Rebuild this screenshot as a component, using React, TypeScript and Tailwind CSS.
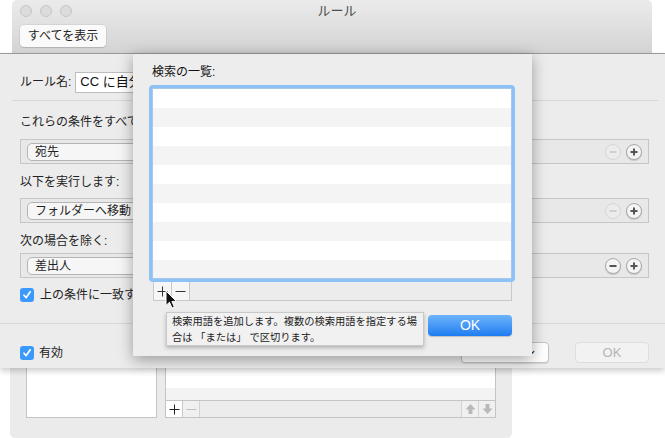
import React from "react";

const font = "font-['Liberation_Sans','Noto_Sans_CJK_JP',sans-serif]";

function CircleButton({ kind, dim }: { kind: "plus" | "minus"; dim?: boolean }) {
  return (
    <div
      className={`flex h-[16px] w-[16px] items-center justify-center rounded-full border ${
        dim ? "border-[#d6d6d6] bg-[#ececec]" : "border-[#a9a9a9] bg-[#f4f4f4] shadow-[0_1px_1px_rgba(0,0,0,0.15)]"
      }`}
    >
      <svg width="10" height="10" viewBox="0 0 10 10">
        <rect x="1.5" y="4" width="7" height="2" fill={dim ? "#d0d0d0" : "#555"} />
        {kind === "plus" ? <rect x="4" y="1.5" width="2" height="7" fill={dim ? "#d0d0d0" : "#555"} /> : null}
      </svg>
    </div>
  );
}

function Checkbox() {
  return (
    <div className="flex h-[14px] w-[14px] items-center justify-center rounded-[3px] bg-[#3b99fc]">
      <svg width="10" height="10" viewBox="0 0 10 10">
        <path d="M2 5.2 L4.2 7.6 L8.2 1.8" stroke="white" strokeWidth="1.7" fill="none" strokeLinecap="round" strokeLinejoin="round" />
      </svg>
    </div>
  );
}

function ConditionRow({ label, minusDim }: { label: string; minusDim: boolean }) {
  return (
    <div className="ml-5 mr-4 flex h-[25px] items-center border border-[#c6c6c6] bg-[#e8e8e8] pl-[6px] pr-[6px]">
      <div className="flex h-[18px] w-[170px] items-center rounded-l-[5px] border border-[#b4b4b4] bg-[#f6f6f6] pl-[7px] text-[12px] text-[#222]">
        {label}
      </div>
      <div className="flex-1" />
      <div className="flex items-center gap-[5px]">
        <CircleButton kind="minus" dim={minusDim} />
        <CircleButton kind="plus" />
      </div>
    </div>
  );
}

function RuleSheet() {
  return (
    <div className="absolute left-0 top-[53px] flex h-[315px] w-[665px] flex-col border-t border-[#9a9a9a] bg-[#ececec] shadow-[0_3px_6px_rgba(0,0,0,0.2)]">
      <div className="ml-5 mt-[18px] flex h-[20px] items-center gap-[4px]">
        <span className="text-[12px] text-[#222]">ルール名:</span>
        <div className="flex h-[21px] w-[300px] items-center border border-[#bdbdbd] bg-white pl-[4px] text-[13px] text-[#111]">
          CC に自分が含まれる
        </div>
      </div>
      <div className="ml-3 mr-[7px] mt-[8px] h-px bg-[#d6d6d6]" />
      <div className="ml-5 mt-[13px] h-[17px] text-[12px] leading-[17px] text-[#222]">これらの条件をすべて満たす場合:</div>
      <div className="mt-[8px]">
        <ConditionRow label="宛先" minusDim />
      </div>
      <div className="ml-5 mt-[10px] h-[17px] text-[12px] leading-[17px] text-[#222]">以下を実行します:</div>
      <div className="mt-[7px]">
        <ConditionRow label="フォルダーへ移動" minusDim />
      </div>
      <div className="ml-5 mt-[10px] h-[17px] text-[12px] leading-[17px] text-[#222]">次の場合を除く:</div>
      <div className="mt-[3px]">
        <ConditionRow label="差出人" minusDim={false} />
      </div>
      <div className="ml-5 mt-[10px] flex h-[14px] items-center gap-[6px] text-[12px] text-[#222]">
        <Checkbox />
        <span>上の条件に一致するメッセージにも適用</span>
      </div>
      <div className="mt-[21px] h-px bg-[#d6d6d6]" />
      <div className="ml-5 mr-4 mt-[18px] flex items-center">
        <div className="flex items-center gap-[5px] text-[12px] text-[#222]">
          <Checkbox />
          <span>有効</span>
        </div>
        <div className="flex-1" />
        <div className="flex h-[21px] w-[88px] items-start justify-center rounded-[4px] border border-[#c4c4c4] bg-white pt-[1px] text-[12px] leading-[14px] text-[#222] shadow-[0_1px_1px_rgba(0,0,0,0.1)]">
          キャンセル
        </div>
        <div className="ml-[26px] flex h-[21px] w-[74px] items-center justify-center rounded-[4px] border border-[#dedede] bg-[#f2f2f2] text-[13px] text-[#b5b5b5]">
          OK
        </div>
      </div>
    </div>
  );
}

function SearchSheet() {
  const rows = Array.from({ length: 10 }, (_, i) => i);
  return (
    <div className="absolute left-[133px] top-[53px] flex h-[303px] w-[399px] flex-col border-t border-[#8a8a8a] bg-[#ededed] shadow-[0_4px_14px_rgba(0,0,0,0.35)]">
      <div className="ml-[19px] mt-[10px] h-[17px] text-[12px] leading-[17px] text-[#111]">検索の一覧:</div>
      <div className="ml-[16px] mt-[4px] w-[366px] rounded-[4px] bg-[#8ec2f6] p-[3px]">
        <div className="flex h-[191px] flex-col overflow-hidden border border-[#a8c8ea] bg-white">
          {rows.map((i) => (
            <div key={i} className={`h-[19px] shrink-0 ${i % 2 === 1 ? "bg-[#f4f4f4]" : "bg-white"}`} />
          ))}
        </div>
      </div>
      <div className="ml-[20px] flex h-[19px] w-[359px] border border-t-0 border-[#c8c8c8] bg-[#ececec]">
        <div className="flex w-[18px] items-center justify-center border-r border-[#c8c8c8] bg-[#f6f6f6]">
          <svg width="11" height="11" viewBox="0 0 11 11">
            <path d="M5.5 0.5 V10.5 M0.5 5.5 H10.5" stroke="#333" strokeWidth="1" />
          </svg>
        </div>
        <div className="flex w-[18px] items-center justify-center border-r border-[#c8c8c8] bg-[#f6f6f6]">
          <svg width="11" height="11" viewBox="0 0 11 11">
            <path d="M0.5 5.5 H10.5" stroke="#333" strokeWidth="1" />
          </svg>
        </div>
      </div>
      <div className="mr-[20px] mt-[14px] flex justify-end">
        <div className="flex h-[21px] w-[84px] items-center justify-center rounded-[4px] bg-gradient-to-b from-[#6cb3fa] to-[#1b7cf0] text-[14px] text-white shadow-[0_1px_1px_rgba(0,0,0,0.2)]">
          OK
        </div>
      </div>
    </div>
  );
}

function BackWindow() {
  return (
    <>
      <div className="absolute left-[12px] top-0 h-[54px] w-[640px] rounded-t-[5px] border-b border-[#a8a8a8] bg-gradient-to-b from-[#ebebeb] to-[#d4d4d4]">
        <div className="flex h-[22px] items-center pl-[8px]">
          <div className="flex gap-[8px]">
            <div className="h-[12px] w-[12px] rounded-full border border-[#c6c6c6] bg-[#dcdcdc]" />
            <div className="h-[12px] w-[12px] rounded-full border border-[#c6c6c6] bg-[#dcdcdc]" />
            <div className="h-[12px] w-[12px] rounded-full border border-[#c6c6c6] bg-[#dcdcdc]" />
          </div>
          <div className="flex-1 pr-[50px] text-center text-[13px] text-[#4d4d4d]">ルール</div>
        </div>
        <div className="ml-[8px] mt-[3px] flex h-[22px] w-[86px] items-center justify-center rounded-[4px] bg-[#fafafa] text-[12px] text-[#222] shadow-[0_0_0_0.5px_rgba(0,0,0,0.1),0_1px_1px_rgba(0,0,0,0.12)]">
          すべてを表示
        </div>
      </div>
      <div className="absolute left-[10px] top-[300px] flex h-[138px] w-[502px] items-end gap-[8px] rounded-b-[5px] bg-[#ebebeb] px-[16px] pb-[20px]">
        <div className="h-[100px] w-[132px] border border-[#c4c4c4] bg-white" />
        <div className="flex h-[100px] w-[332px] flex-col border border-[#c4c4c4]">
          <div className="h-[82px] bg-white" />
          <div className="h-[14px] bg-[#f3f3f3]" />
          <div className="flex h-[20px] border-t border-[#c4c4c4] bg-[#ececec]">
            <div className="flex w-[17px] items-center justify-center border-r border-[#c8c8c8] bg-white">
              <svg width="11" height="11" viewBox="0 0 11 11">
                <path d="M5.5 0.5 V10.5 M0.5 5.5 H10.5" stroke="#222" strokeWidth="1" />
              </svg>
            </div>
            <div className="flex w-[17px] items-center justify-center border-r border-[#d4d4d4] bg-[#f0f0f0]">
              <svg width="11" height="11" viewBox="0 0 11 11">
                <path d="M0.5 5.5 H10.5" stroke="#c0c0c0" strokeWidth="1" />
              </svg>
            </div>
            <div className="flex-1" />
            <div className="flex w-[17px] items-center justify-center border-l border-[#d4d4d4] bg-[#f0f0f0]">
              <svg width="11" height="12" viewBox="0 0 11 12">
                <path d="M5.5 1 L10.5 6.5 H7.5 V11 H3.5 V6.5 H0.5 Z" fill="#b9b9b9" />
              </svg>
            </div>
            <div className="flex w-[17px] items-center justify-center border-l border-[#d4d4d4] bg-[#f0f0f0]">
              <svg width="11" height="12" viewBox="0 0 11 12">
                <path d="M5.5 11 L10.5 5.5 H7.5 V1 H3.5 V5.5 H0.5 Z" fill="#b9b9b9" />
              </svg>
            </div>
          </div>
        </div>
      </div>
    </>
  );
}

export default function App() {
  return (
    <div className={`relative h-[438px] w-[665px] overflow-hidden bg-white ${font}`}>
      <BackWindow />
      <RuleSheet />
      <SearchSheet />
      <div className="absolute left-[166px] top-[312px] h-[34px] w-[258px] whitespace-nowrap border border-[#c9c9c9] bg-[#f1f1f1] px-[5px] pt-[1px] text-[10.25px] leading-[16px] text-[#222] shadow-[0_2px_4px_rgba(0,0,0,0.25)]">
        <div>検索用語を追加します。複数の検索用語を指定する場</div>
        <div>合は 「または」 で区切ります。</div>
      </div>
      <svg className="absolute left-[165px] top-[290px]" width="13" height="20" viewBox="0 0 13 20">
        <path d="M1 1 L1 15.5 L4.5 12.2 L7 18 L9.3 17 L6.9 11.4 L11.5 11.4 Z" fill="#111" stroke="white" strokeWidth="1" strokeLinejoin="round" />
      </svg>
    </div>
  );
}
